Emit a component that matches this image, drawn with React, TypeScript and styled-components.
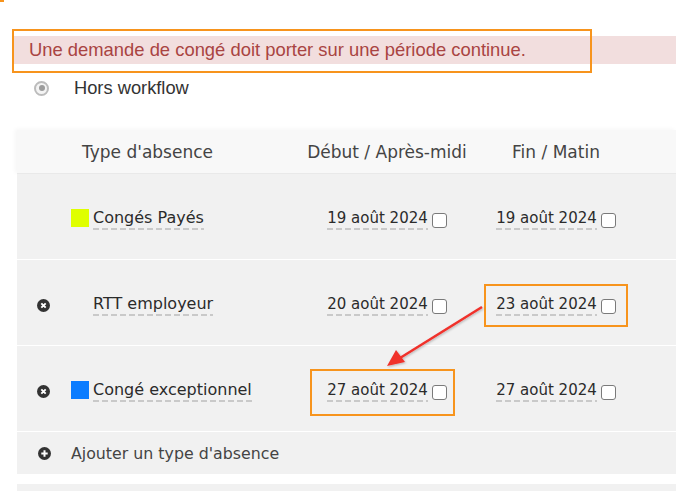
import React from "react";
import styled, { createGlobalStyle } from "styled-components";

const Global = createGlobalStyle`
  html, body { margin: 0; padding: 0; background: #ffffff; }
  body { font-family: "DejaVu Sans", sans-serif; }
  * { box-sizing: border-box; }
`;

const Page = styled.div`
  position: relative;
  width: 676px;
  height: 491px;
  overflow: hidden;
  padding-top: 36px;
`;

const Alert = styled.div`
  margin-left: 13px;
  height: 28px;
  background: #f2dede;
  color: #a94442;
  font-family: "Liberation Sans", Arial, sans-serif;
  font-size: 18.4px;
  display: flex;
  align-items: center;
  padding-left: 16px;
`;

const RadioRow = styled.label`
  display: flex;
  align-items: center;
  height: 48px;
  padding-left: 34px;
  gap: 25px;
  font-family: "Liberation Sans", Arial, sans-serif;
  font-size: 18.3px;
  color: #333;
  margin-bottom: 18px;
`;

const Radio = styled.span`
  width: 15px;
  height: 15px;
  border-radius: 50%;
  border: 2.5px solid #bcbcbc;
  background: #f4f4f4;
  display: flex;
  align-items: center;
  justify-content: center;
  &::after {
    content: "";
    width: 6px;
    height: 6px;
    border-radius: 50%;
    background: #9c9c9c;
  }
`;

const Table = styled.div`
  margin-left: 17px;
  display: flex;
  flex-direction: column;
`;

const cols = "52px 221px 194px 144px 1fr";

const HeaderRow = styled.div`
  display: grid;
  grid-template-columns: ${cols};
  height: 44px;
  align-items: center;
  background: #f8f8f8;
  border-bottom: 1px solid #e9e9e9;
  box-shadow: -2px -1px 4px rgba(0, 0, 0, 0.04);
  font-size: 17px;
  color: #444;
`;

const HeadCell = styled.div<{ $center?: boolean; $pad?: number }>`
  text-align: ${(p) => (p.$center ? "center" : "left")};
  padding-left: ${(p) => p.$pad ?? 0}px;
  white-space: nowrap;
`;

const Row = styled.div`
  display: grid;
  grid-template-columns: ${cols};
  height: 86px;
  padding-top: 5px;
  align-items: center;
  background: #f1f1f1;
  border-bottom: 1px solid #ffffff;
  font-size: 15px;
  color: #2b2b2b;
`;

const IconCell = styled.div`
  display: flex;
  justify-content: center;
  align-items: center;
`;

const TypeCell = styled.div`
  display: flex;
  align-items: center;
  gap: 4px;
  padding-left: 2px;
  font-size: 16px;
`;

const Swatch = styled.span<{ $color?: string }>`
  width: 18px;
  height: 18px;
  flex: none;
  background: ${(p) => p.$color ?? "transparent"};
  margin-top: -3px;
`;

const Dashed = styled.span`
  display: inline-block;
  padding-bottom: 3px;
  white-space: nowrap;
  background-image: repeating-linear-gradient(
    to right,
    #c9c9c9 0 6px,
    transparent 6px 9px
  );
  background-size: 100% 2px;
  background-repeat: no-repeat;
  background-position: left bottom;
`;

const DateCell = styled.div`
  display: flex;
  justify-content: center;
  align-items: center;
  gap: 4px;
`;

const Check = styled.span`
  width: 15px;
  height: 15px;
  border: 1.5px solid #7a7a7a;
  border-radius: 3px;
  background: #fff;
  flex: none;
  margin-top: 2px;
`;

const AddRow = styled.div`
  display: grid;
  grid-template-columns: 54px 1fr;
  height: 42px;
  align-items: center;
  background: #f1f1f1;
  font-size: 15.8px;
  color: #444;
`;

const Spacer = styled.div`
  height: 10px;
  background: #fff;
`;

const NextSection = styled.div`
  height: 20px;
  background: #f1f1f1;
`;

const Annot = styled.div`
  position: absolute;
  border: 2px solid #f7941d;
  pointer-events: none;
`;

const ArrowSvg = styled.svg`
  position: absolute;
  left: 0;
  top: 0;
  pointer-events: none;
`;

const CircleIcon = ({ plus }: { plus?: boolean }) => (
  <svg width="13" height="13" viewBox="0 0 13 13">
    <circle cx="6.5" cy="6.5" r="6.5" fill="#333" />
    {plus ? (
      <path d="M6.5 3.3v6.4M3.3 6.5h6.4" stroke="#fff" strokeWidth="2" />
    ) : (
      <path d="M4.3 4.3l4.4 4.4M8.7 4.3l-4.4 4.4" stroke="#fff" strokeWidth="1.9" />
    )}
  </svg>
);

type Line = {
  type: string;
  color?: string;
  removable: boolean;
  start: string;
  end: string;
};

const lines: Line[] = [
  { type: "Congés Payés", color: "#dfff00", removable: false, start: "19 août 2024", end: "19 août 2024" },
  { type: "RTT employeur", removable: true, start: "20 août 2024", end: "23 août 2024" },
  { type: "Congé exceptionnel", color: "#0a7cff", removable: true, start: "27 août 2024", end: "27 août 2024" },
];

export default function App() {
  return (
    <Page>
      <Global />
      <Alert>Une demande de congé doit porter sur une période continue.</Alert>
      <RadioRow>
        <Radio />
        Hors workflow
      </RadioRow>
      <Table>
        <HeaderRow>
          <span />
          <HeadCell $pad={13}>Type d'absence</HeadCell>
          <HeadCell $center>Début / Après-midi</HeadCell>
          <HeadCell $center>Fin / Matin</HeadCell>
          <span />
        </HeaderRow>
        {lines.map((l) => (
          <Row key={l.type}>
            <IconCell>{l.removable && <CircleIcon />}</IconCell>
            <TypeCell>
              <Swatch $color={l.color} />
              <Dashed>{l.type}</Dashed>
            </TypeCell>
            <DateCell>
              <Dashed>{l.start}</Dashed>
              <Check />
            </DateCell>
            <DateCell>
              <Dashed>{l.end}</Dashed>
              <Check />
            </DateCell>
            <span />
          </Row>
        ))}
        <AddRow>
          <IconCell>
            <CircleIcon plus />
          </IconCell>
          <span>Ajouter un type d'absence</span>
        </AddRow>
        <Spacer />
        <NextSection />
      </Table>

      <Annot style={{ left: 0, top: -2, width: 4, height: 4, borderWidth: 2 }} />
      <Annot style={{ left: 12, top: 29, width: 580, height: 44 }} />
      <Annot style={{ left: 484, top: 284, width: 144, height: 43 }} />
      <Annot style={{ left: 310, top: 369, width: 145, height: 47 }} />
      <ArrowSvg width="676" height="491">
        <defs>
          <filter id="sh" x="-20%" y="-20%" width="140%" height="140%">
            <feDropShadow dx="1" dy="1" stdDeviation="1" floodColor="#000" floodOpacity="0.25" />
          </filter>
        </defs>
        <g filter="url(#sh)">
          <line x1="482" y1="307" x2="400" y2="358" stroke="#f0302c" strokeWidth="2.5" />
          <polygon points="387,366 396,350 405,362" fill="#f0302c" />
        </g>
      </ArrowSvg>
    </Page>
  );
}
